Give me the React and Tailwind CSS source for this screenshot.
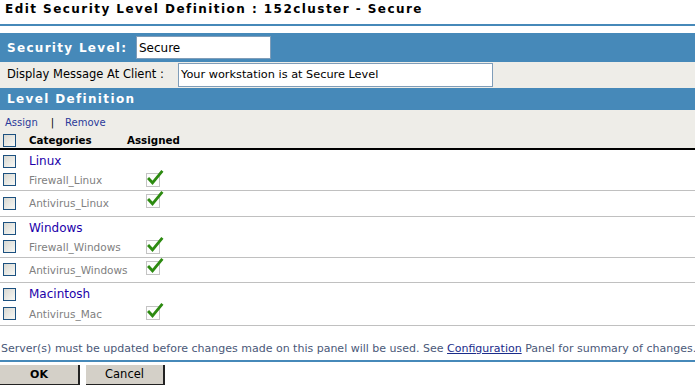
import React from "react";

function Box() {
  return (
    <span className="inline-block w-[13px] h-[13px] border border-[#1c5180] bg-gradient-to-br from-[#d8d8d2] to-[#f8f8f4]" />
  );
}

function Check() {
  return (
    <svg width="18" height="17" viewBox="0 0 18 17" className="block">
      <rect x="0.5" y="3.5" width="13" height="13" fill="#fdfdfd" stroke="#c4c4c4" />
      <polyline
        points="3,9 6.5,12.8 15.5,2"
        fill="none"
        stroke="#2c8a10"
        strokeWidth="2.8"
        strokeLinecap="square"
        strokeLinejoin="miter"
      />
    </svg>
  );
}

function GroupRow({ name }) {
  return (
    <div className="h-[20px] flex items-center pt-[2px]">
      <div className="w-[29px] pl-[3px] flex items-center">
        <Box />
      </div>
      <span className="text-[12px] text-[#2200aa]">{name}</span>
    </div>
  );
}

function ItemRow({ name, h }) {
  return (
    <div className="flex border-b border-[#c0c0c0]" style={{ height: h }}>
      <div className="w-[29px] pl-[3px] flex items-center pb-[1px]">
        <Box />
      </div>
      <span className="w-[117px] flex items-center text-[10.5px] text-[#808080]">{name}</span>
      <div className="pt-0">
        <Check />
      </div>
    </div>
  );
}

export default function App() {
  return (
    <div className="w-[695px] h-[385px] bg-white overflow-hidden font-['DejaVu_Sans',sans-serif] text-[11px] text-black leading-none">
      <div className="h-[24px] pl-[5px] pt-[3px] font-bold text-[12px] tracking-[1.45px] text-black whitespace-nowrap">
        Edit Security Level Definition : 152cluster - Secure
      </div>
      <div className="h-[2px] bg-[#4689b9]" />
      <div className="h-[7px]" />
      <div className="h-[29px] bg-[#4689b9] flex items-center pl-[7px]">
        <span className="text-white font-bold text-[12px] tracking-[1.3px] w-[129px] whitespace-nowrap">Security Level:</span>
        <div className="w-[135px] h-[23px] bg-white border border-[#7f9db9] flex items-center pl-[2px] text-[12px]">
          Secure
        </div>
      </div>
      <div className="h-[26px] bg-[#eeede8] flex items-center pl-[7px]">
        <span className="w-[171px] text-[11.5px] whitespace-nowrap">Display Message At Client :</span>
        <div className="w-[315px] h-[24px] bg-white border border-[#7f9db9] flex items-center pl-[2px] text-[11.3px]">
          Your workstation is at Secure Level
        </div>
      </div>
      <div className="h-[22px] bg-[#4689b9] flex items-center pl-[7px] text-white font-bold text-[12px] tracking-[1.35px]">
        Level Definition
      </div>
      <div className="bg-[#eeede8] h-[40px] border-b-2 border-black">
        <div className="h-[22px] flex items-center pt-[3px] pl-[5px] text-[10px] text-[#2a3a9a]">
          <span>Assign</span>
          <span className="ml-[13px] text-black">|</span>
          <span className="ml-[11px]">Remove</span>
        </div>
        <div className="h-[16px] flex items-center">
          <div className="w-[29px] pl-[3px] flex items-center">
            <Box />
          </div>
          <span className="w-[98px] font-bold text-[10.3px]">Categories</span>
          <span className="font-bold text-[10.3px]">Assigned</span>
        </div>
      </div>
      <GroupRow name="Linux" />
      <ItemRow name="Firewall_Linux" h={21} />
      <ItemRow name="Antivirus_Linux" h={26} />
      <GroupRow name="Windows" />
      <ItemRow name="Firewall_Windows" h={21} />
      <ItemRow name="Antivirus_Windows" h={25} />
      <GroupRow name="Macintosh" />
      <ItemRow name="Antivirus_Mac" h={23} />
      <div className="h-[34px] pt-[17px] pl-[1px] text-[#4a5878] whitespace-nowrap">
        Server(s) must be updated before changes made on this panel will be used. See{" "}
        <span className="text-[#1a2c8a] underline">Configuration</span> Panel for summary of changes.
      </div>
      <div className="h-[2px] bg-[#4689b9]" />
      <div className="flex pt-[3px] gap-[6px]">
        <div className="w-[80px] h-[20px] bg-[#d4d0c8] border-r-2 border-b border-[#222] flex items-center justify-center font-bold text-[11px]">
          OK
        </div>
        <div className="w-[79px] h-[20px] bg-[#d4d0c8] border-r-2 border-b border-[#222] flex items-center justify-center text-[11.5px]">
          Cancel
        </div>
      </div>
    </div>
  );
}
